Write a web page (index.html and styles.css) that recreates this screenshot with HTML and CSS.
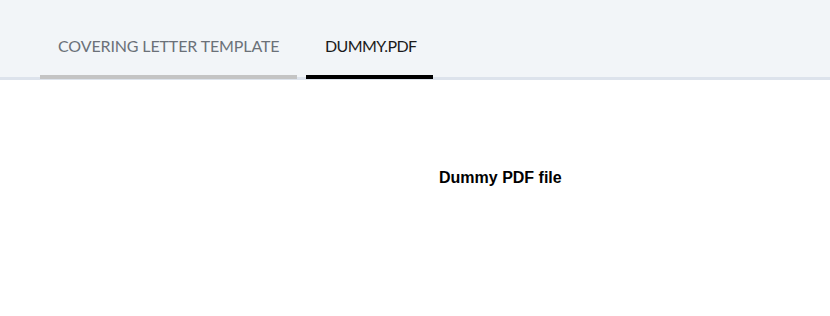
FILE: index.html
```html
<!DOCTYPE html>
<html lang="en">
<head>
    <meta charset="UTF-8">
    <title>Attachments</title>
    <link rel="stylesheet" href="styles.css">
</head>
<body>
<div class="tabs">
    <div class="tab tab_first">COVERING LETTER TEMPLATE</div>
    <div class="tab tab_active">DUMMY.PDF</div>
</div>
<div class="viewer">
    <p class="pdf_title">Dummy PDF file</p>
</div>
</body>
</html>
```

FILE: styles.css
```css
*{margin: 0;padding: 0;}
body{
    background: #fff;
    font-family: Lato, "Open Sans", sans-serif;
}
.tabs{
    display: flex;
    gap: 9px;
    height: 80px;
    padding-left: 40px;
    background: linear-gradient(to bottom, #f2f5f8 77px, #dde3ec 77px);
}
.tab{
    height: 79px;
    box-sizing: border-box;
    padding: 36px 0 0 18px;
    border-bottom: 4px solid transparent;
    font-size: 16px;
    line-height: 20px;
    letter-spacing: -0.13px;
    color: #6b7178;
}
.tab_first{
    width: 257px;
    border-bottom-color: #c4c4c4;
}
.tab_active{
    width: 127px;
    padding-left: 19px;
    letter-spacing: -0.6px;
    color: #1b1b1b;
    border-bottom-color: #000;
}
.viewer{
    padding: 88px 0 0 439px;
}
.pdf_title{
    font-family: "Liberation Sans", Arial, sans-serif;
    font-weight: bold;
    font-size: 16px;
    line-height: 20px;
    color: #000;
}
```
